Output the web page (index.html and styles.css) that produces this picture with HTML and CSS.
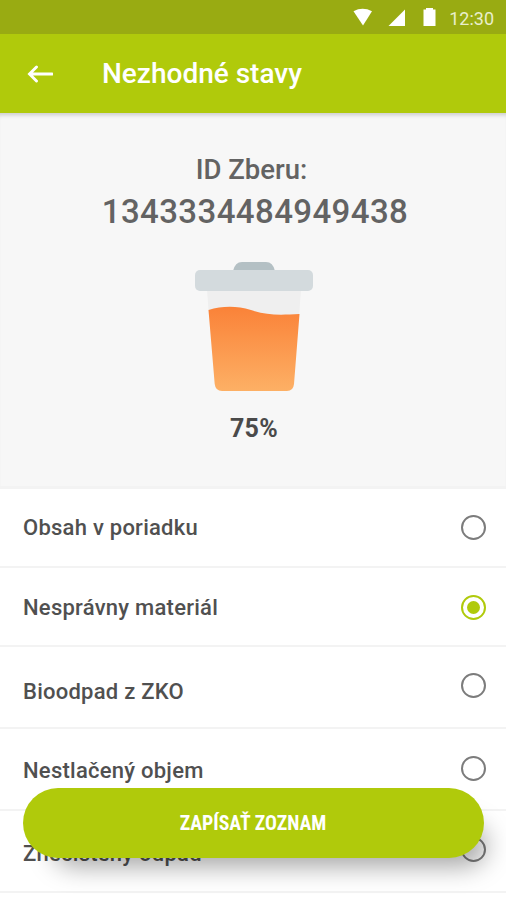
FILE: index.html
```
<!DOCTYPE html>
<html lang="sk">
	<head>
		<meta charset="utf-8">
		<title>Nezhodné stavy</title>
		<link rel="stylesheet" href="styles.css">
	</head>
	<body>
		<div class="statusbar">
			<svg class="status-icons" width="84" height="34" viewBox="0 0 84 34">
				<path d="M0.500 11.200 Q9.500 6.400 19 11.200 L10 25.500 Z"/>
				<path d="M35.500 26 L52 9.500 V26 Z"/>
				<path d="M73 8 h7 v1.500 h2.500 V26 h-12 V9.500 H73 Z"/>
			</svg>
			<span class="clock">12:30</span>
		</div>
		<header class="appbar">
			<svg class="back" width="26" height="18" viewBox="0 0 26 18">
				<path d="M25 9 H3 M9.500 2 L2.500 9 L9.500 16"/>
			</svg>
			<h1>Nezhodné stavy</h1>
		</header>

		<section class="summary">
			<p class="label">ID Zberu:</p>
			<p class="number">1343334484949438</p>
			<svg class="bin" width="120" height="132" viewBox="0 0 120 132">
				<defs>
					<linearGradient id="fill" x1="0" y1="0" x2="0" y2="1">
						<stop offset="0" stop-color="#fa8238"/>
						<stop offset="1" stop-color="#fdb065"/>
					</linearGradient>
				</defs>
				<path fill="#b4c0c4" d="M39 10 Q41 1 48 1 H72 Q79 1 81 10 Z"/>
				<path fill="#efefef" d="M13 28 H107 L105 56 H15 Z"/>
				<rect fill="#d3dadd" x="1" y="9" width="118" height="21" rx="5"/>
				<path fill="url(#fill)" d="M14.500 49 C28 45 42 44.500 57 49 C72 54.500 86 54 105.500 53 L100 123 Q99.300 130 93 130 H28 Q21.500 130 20.700 123 Z"/>
			</svg>
			<p class="percent">75%</p>
		</section>

		<form class="list">
			<label class="row r1"><span>Obsah v poriadku</span><input type="radio" name="state"></label>
			<label class="row r2"><span>Nesprávny materiál</span><input type="radio" name="state" checked></label>
			<label class="row r3"><span>Bioodpad z ZKO</span><input type="radio" name="state"></label>
			<label class="row r4"><span>Nestlačený objem</span><input type="radio" name="state"></label>
			<label class="row r5"><span>Znečistený odpad</span><input type="radio" name="state"></label>
		</form>
		<button class="submit">ZAPÍSAŤ ZOZNAM</button>
	</body>
</html>
```
FILE: styles.css
```
* {
	box-sizing: border-box;
}
body {
	margin: 0;
	height: 900px;
	overflow: hidden;
	background: #fff;
	font-family: Roboto, sans-serif;
	font-weight: 500;
}
h1, p {
	margin: 0;
}
.statusbar {
	display: flex;
	justify-content: flex-end;
	align-items: center;
	height: 34px;
	padding-right: 12px;
	background: #99ab12;
}
.status-icons {
	margin-right: 12px;
	fill: #fff;
}
.clock {
	font-size: 18px;
	font-weight: 400;
	color: #e9eecb;
	padding-top: 2px;
}
.appbar {
	display: flex;
	align-items: center;
	height: 79px;
	padding-left: 27px;
	background: #b0ca0b;
}
.back {
	fill: none;
	stroke: #fff;
	stroke-width: 2.9;
	stroke-linecap: round;
}
h1 {
	margin-left: 49px;
	font-size: 28px;
	font-weight: 500;
	color: #fff;
}
.summary {
	display: flex;
	flex-direction: column;
	align-items: center;
	height: 376px;
	padding-top: 38px;
	background: #f7f7f7;
	color: #636363;
	border-bottom: 3px solid #f3f3f3;
	box-shadow: inset 0 5px 4px -3px rgba(0, 0, 0, 0.18);
}
.label {
	margin-left: -3px;
	font-size: 27.5px;
	line-height: 38px;
}
.number {
	margin-left: 4px;
	font-size: 33px;
	line-height: 46px;
	letter-spacing: 0.4px;
}
.bin {
	margin: 26px 0 0 1px;
}
.percent {
	margin: 20px 0 0 2px;
	font-size: 25px;
	line-height: 32px;
	font-weight: 700;
	letter-spacing: 0.3px;
	color: #4a4a4a;
}
.row {
	display: flex;
	justify-content: space-between;
	align-items: center;
	height: 82px;
	padding: 0 20px 0 23px;
	border-bottom: 2px solid #f3f3f3;
	font-size: 22px;
	letter-spacing: 0.25px;
	color: #505050;
}
.r1 {
	height: 79px;
}
.r2 {
	height: 79px;
}
.r2 span,
.r2 input {
	margin-top: 2px;
}
.r3 span {
	padding-top: 8px;
}
.r3 input {
	margin-bottom: 4px;
}
.r4 span {
	padding-top: 2px;
}
.r4 input {
	margin-bottom: 2px;
}
.r5 span {
	padding-top: 4px;
}
.r5 input {
	margin-bottom: 4px;
}
input {
	appearance: none;
	display: grid;
	place-items: center;
	width: 25px;
	height: 25px;
	margin: 0;
	border: 2px solid #7c7c7c;
	border-radius: 50%;
}
input:checked {
	border-color: #b0ca0b;
}
input:checked::before {
	content: "";
	width: 13px;
	height: 13px;
	border-radius: 50%;
	background: #b0ca0b;
}
.submit {
	position: absolute;
	left: 23px;
	top: 788px;
	width: 461px;
	height: 70px;
	padding: 0 1px 0 0;
	border: none;
	border-radius: 35px;
	background: #b0ca0b;
	box-shadow: 16px 22px 26px -14px rgba(0, 0, 0, 0.36);
	color: #fff;
	font-family: "Roboto Condensed", Roboto, sans-serif;
	font-stretch: 75%;
	font-size: 19.8px;
	font-weight: 700;
}
```
